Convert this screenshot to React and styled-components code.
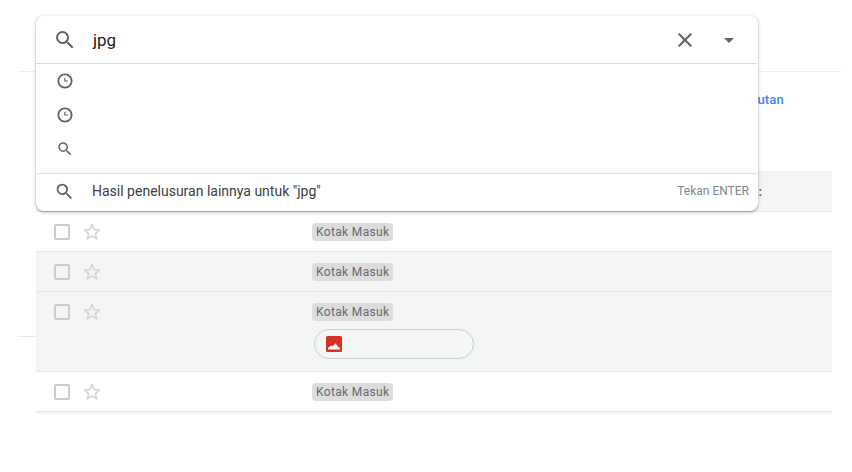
import React from "react";
import styled, { createGlobalStyle } from "styled-components";

const GlobalStyle = createGlobalStyle`
  html, body {
    margin: 0;
    padding: 0;
    background: #fff;
  }
  body {
    font-family: Roboto, "Liberation Sans", sans-serif;
    color: #202124;
  }
`;

const Page = styled.div`
  position: relative;
  width: 852px;
  height: 472px;
  overflow: hidden;
`;

const TopBar = styled.header`
  height: 71px;
  margin: 0 10px 0 18px;
  border-bottom: 1px solid #eeeeee;
`;

const Toolbar = styled.div`
  height: 99px;
  width: 784px;
  display: flex;
  justify-content: flex-end;
  padding-top: 20px;
  box-sizing: border-box;
`;

const ToolbarLink = styled.a`
  font-size: 13px;
  font-weight: 500;
  line-height: 16px;
  color: #4285f4;
  letter-spacing: 0.2px;
`;

const Content = styled.div`
  display: flex;
  padding-left: 18px;
`;

const Gutter = styled.div`
  width: 18px;
  height: 1px;
  margin-top: 165px;
  background: #e6eaed;
`;

const List = styled.div`
  width: 796px;
  border-top: 1px solid #eef0f0;
  border-bottom: 2px solid #f4f5f5;
`;

const Row = styled.div`
  display: flex;
  flex-direction: column;
  height: ${(p) => (p.$tall ? 80 : 40)}px;
  box-sizing: border-box;
  border-bottom: 1px solid #e6e8e9;
  background: ${(p) => (p.$shaded ? "#f4f6f6" : "#fff")};
`;

const RowMain = styled.div`
  display: flex;
  align-items: center;
  height: 39px;
  padding-left: 18px;
`;

const Checkbox = styled.span`
  width: 16px;
  height: 16px;
  box-sizing: border-box;
  border: 2px solid #cccccc;
  border-radius: 2px;
`;

const StarIcon = styled.svg`
  width: 22px;
  height: 22px;
  margin-left: 11px;
  fill: #d3d3d3;
`;

const Chip = styled.span`
  margin-left: 209px;
  height: 18px;
  padding: 0 4px;
  border-radius: 4px;
  background: #dddddd;
  color: #666a6e;
  font-size: 12px;
  line-height: 18px;
  letter-spacing: 0.35px;
`;

const Time = styled.span`
  margin-left: auto;
  margin-right: 70px;
  font-size: 13px;
  font-weight: 500;
  color: #3c4a78;
`;

const Attachment = styled.div`
  display: flex;
  align-items: center;
  width: 160px;
  height: 30px;
  margin: -2px 0 0 278px;
  padding-left: 11px;
  box-sizing: border-box;
  border: 1px solid #c8ced8;
  border-radius: 15px;
`;

const ImageBadge = styled.svg`
  width: 16px;
  height: 16px;
`;

const SearchPanel = styled.div`
  position: absolute;
  left: 36px;
  top: 16px;
  width: 722px;
  height: 195px;
  background: #fff;
  border-radius: 8px;
  box-shadow: 0 1px 2px rgba(60, 64, 67, 0.4), 0 1px 5px rgba(60, 64, 67, 0.18);
  display: flex;
  flex-direction: column;
`;

const SearchBar = styled.div`
  display: flex;
  align-items: center;
  height: 47px;
  padding-left: 17px;
  margin-right: 1px;
  border-bottom: 1px solid #dadada;
`;

const Icon = styled.svg`
  flex: none;
  width: ${(p) => p.$size}px;
  height: ${(p) => p.$size}px;
  fill: #5f6368;
`;

const Query = styled.span`
  margin-left: 16px;
  font-size: 17px;
  line-height: 24px;
  color: #202124;
`;

const ClearButton = styled.span`
  display: flex;
  margin-left: auto;
`;

const CaretButton = styled.span`
  display: flex;
  margin: 0 16px 0 20px;
`;

const Suggestions = styled.div`
  height: 110px;
  box-sizing: border-box;
  border-bottom: 1px solid #e3e3e3;
  margin: 0 1px;
  display: flex;
  flex-direction: column;
`;

const Suggestion = styled.div`
  display: flex;
  align-items: center;
  height: 34px;
  padding-left: 19px;
`;

const Footer = styled.div`
  display: flex;
  align-items: center;
  flex: 1;
  padding: 0 9px 3px 18px;
`;

const FooterText = styled.span`
  margin-left: 17px;
  font-size: 14px;
  color: #3c4043;
`;

const Hint = styled.span`
  margin-left: auto;
  font-size: 12px;
  color: #80868b;
`;

const SEARCH =
  "M15.5 14h-.79l-.28-.27A6.471 6.471 0 0 0 16 9.5 6.5 6.5 0 1 0 9.5 16c1.61 0 3.09-.59 4.23-1.57l.27.28v.79l5 4.99L20.49 19l-4.99-5zm-6 0C7.01 14 5 11.99 5 9.5S7.01 5 9.5 5 14 7.01 14 9.5 11.99 14 9.5 14z";
const CLOCK =
  "M12 2C6.48 2 2 6.48 2 12s4.48 10 10 10 10-4.48 10-10S17.52 2 12 2zm0 17.6c-4.2 0-7.6-3.4-7.6-7.6S7.8 4.4 12 4.4s7.6 3.4 7.6 7.6-3.4 7.6-7.6 7.6zM11 8h1.6v3.2h3.4v1.6h-5z";
const CLOSE =
  "M19 6.41L17.59 5 12 10.59 6.41 5 5 6.41 10.59 12 5 17.59 6.41 19 12 13.41 17.59 19 19 17.59 13.41 12z";
const STAR =
  "M22 9.24l-7.19-.62L12 2 9.19 8.63 2 9.24l5.46 4.73L5.82 21 12 17.27 18.18 21l-1.63-7.03L22 9.24zM12 15.4l-3.76 2.27 1-4.28-3.32-2.88 4.38-.38L12 6.1l1.71 4.04 4.38.38-3.32 2.88 1 4.28L12 15.4z";

const Glyph = ({ d, size }) => (
  <Icon $size={size} viewBox="0 0 24 24">
    <path d={d} />
  </Icon>
);

const rows = [
  { shaded: true, time: ":" },
  { shaded: false },
  { shaded: true },
  { shaded: true, attachment: true },
  { shaded: false },
];

const MailRow = ({ shaded, time, attachment }) => (
  <Row $shaded={shaded} $tall={attachment}>
    <RowMain>
      <Checkbox />
      <StarIcon viewBox="0 0 24 24">
        <path d={STAR} />
      </StarIcon>
      <Chip>Kotak Masuk</Chip>
      {time && <Time>{time}</Time>}
    </RowMain>
    {attachment && (
      <Attachment>
        <ImageBadge viewBox="0 0 16 16">
          <rect width="16" height="16" rx="1.5" fill="#d93025" />
          <path d="M2 13.4v-1.6l3.2-2.4 1.4 1 2.8-3.1 2.2 3 2.4 1.6v1.5z" fill="#fff" />
        </ImageBadge>
      </Attachment>
    )}
  </Row>
);

export default function App() {
  return (
    <Page>
      <GlobalStyle />
      <TopBar />
      <Toolbar>
        <ToolbarLink>Urutan</ToolbarLink>
      </Toolbar>
      <Content>
        <Gutter />
        <List>
          {rows.map((row, i) => (
            <MailRow key={i} {...row} />
          ))}
        </List>
      </Content>

      <SearchPanel>
        <SearchBar>
          <Glyph d={SEARCH} size={24} />
          <Query>jpg</Query>
          <ClearButton>
            <Glyph d={CLOSE} size={24} />
          </ClearButton>
          <CaretButton>
            <Glyph d="M7 10l5 5 5-5z" size={24} />
          </CaretButton>
        </SearchBar>
        <Suggestions>
          <Suggestion>
            <Glyph d={CLOCK} size={18} />
          </Suggestion>
          <Suggestion>
            <Glyph d={CLOCK} size={18} />
          </Suggestion>
          <Suggestion>
            <Glyph d={SEARCH} size={18} />
          </Suggestion>
        </Suggestions>
        <Footer>
          <Glyph d={SEARCH} size={21} />
          <FooterText>Hasil penelusuran lainnya untuk "jpg"</FooterText>
          <Hint>Tekan ENTER</Hint>
        </Footer>
      </SearchPanel>
    </Page>
  );
}
